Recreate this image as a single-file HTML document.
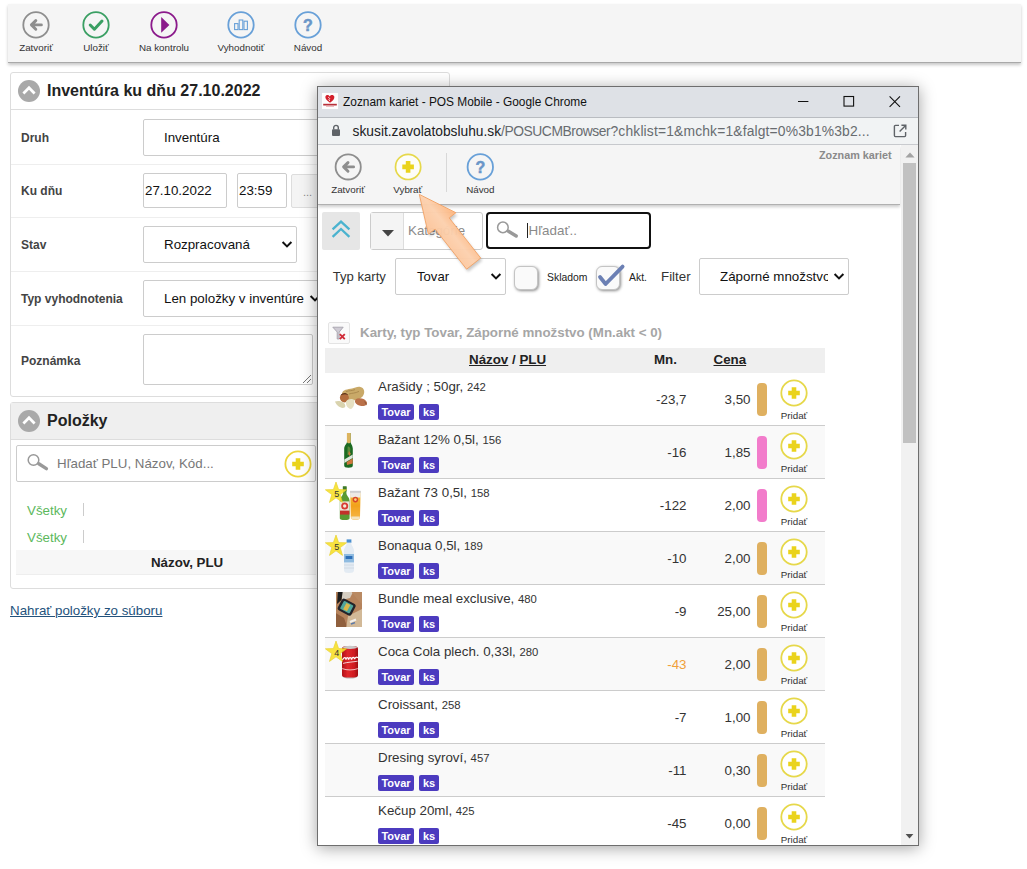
<!DOCTYPE html>
<html lang="sk">
<head>
<meta charset="utf-8">
<title>Inventúra</title>
<style>
*{box-sizing:border-box;}
html,body{margin:0;padding:0;}
body{width:1027px;height:869px;overflow:hidden;background:#fff;font-family:"Liberation Sans",sans-serif;color:#333;position:relative;}
.abs{position:absolute;}
.t{position:absolute;white-space:nowrap;line-height:1;}
/* main toolbar */
#tb{left:8px;top:4px;width:1013px;height:59px;background:#f5f5f5;border-bottom:1px solid #a9a9a9;box-shadow:0 2px 3px rgba(0,0,0,.22);}
.tbl{position:absolute;font-size:9.8px;color:#333;white-space:nowrap;line-height:1;transform:translateX(-50%);}
/* panels */
.panel{position:absolute;border:1px solid #ddd;border-radius:3px;background:#fff;}
.ptitle{position:absolute;font-weight:bold;font-size:16px;color:#222;white-space:nowrap;line-height:1;}
.lbl{position:absolute;font-weight:bold;font-size:12px;color:#444;white-space:nowrap;line-height:1;}
.fld{position:absolute;border:1px solid #ccc;border-radius:2px;background:#fff;}
.ftx{position:absolute;font-size:13.33px;color:#111;white-space:nowrap;line-height:1;}
.tag{position:absolute;height:16px;border-radius:2px;background:#4c3bbf;color:#fff;font-weight:bold;font-size:11px;line-height:16px;text-align:center;white-space:nowrap;}
.num{text-align:right;font-size:13.33px;color:#333;}
.sep{position:absolute;height:1px;background:#eee;}
</style>
</head>
<body>

<!-- ================= MAIN TOOLBAR ================= -->
<div id="tb" class="abs"></div>
<svg class="abs" style="left:0;top:0" width="340" height="62" viewBox="0 0 340 62">
  <!-- Zatvorit -->
  <circle cx="36" cy="24.9" r="12.7" fill="#f5f5f5" stroke="#8e8e8e" stroke-width="1.8"/>
  <path d="M41.4 24.9H32M35.8 20.6L31.4 24.9L35.8 29.2" fill="none" stroke="#8e8e8e" stroke-width="2.9" stroke-linecap="round" stroke-linejoin="round"/>
  <!-- Ulozit -->
  <circle cx="96" cy="24.9" r="12.7" fill="#f5f5f5" stroke="#3a9f63" stroke-width="1.8"/>
  <path d="M90.2 25L94.4 29.2L102 21" fill="none" stroke="#3a9f63" stroke-width="3" stroke-linecap="round" stroke-linejoin="round"/>
  <!-- Na kontrolu -->
  <circle cx="164" cy="24.9" r="12.7" fill="#f5f5f5" stroke="#8b1a8b" stroke-width="1.8"/>
  <path d="M161.2 17L169.4 24.9L161.2 32.8Z" fill="#8b1a8b"/>
  <!-- Vyhodnotit -->
  <circle cx="241" cy="24.9" r="12.7" fill="#f5f5f5" stroke="#68a0d8" stroke-width="1.8"/>
  <rect x="234.6" y="23.6" width="3.4" height="6" fill="none" stroke="#68a0d8" stroke-width="1.1"/>
  <rect x="239.2" y="20" width="3.6" height="9.6" fill="none" stroke="#68a0d8" stroke-width="1.1"/>
  <rect x="244" y="21.2" width="3.4" height="8.4" fill="none" stroke="#68a0d8" stroke-width="1.1"/>
  <!-- Navod -->
  <circle cx="308" cy="24.9" r="12.7" fill="#f5f5f5" stroke="#68a0d8" stroke-width="1.8"/>
  <text x="308" y="30.8" text-anchor="middle" font-family="Liberation Sans" font-weight="bold" font-size="16" fill="#6a96c8" stroke="#6a96c8" stroke-width=".5">?</text>
</svg>
<div class="tbl" style="left:36px;top:43px">Zatvoriť</div>
<div class="tbl" style="left:96px;top:43px">Uložiť</div>
<div class="tbl" style="left:164px;top:43px">Na kontrolu</div>
<div class="tbl" style="left:241px;top:43px">Vyhodnotiť</div>
<div class="tbl" style="left:308px;top:43px">Návod</div>

<!-- ================= PANEL 1 ================= -->
<div class="panel" style="left:10px;top:72px;width:440px;height:325px;"></div>
<div class="sep" style="left:11px;top:109px;width:438px;background:#ddd"></div>
<svg class="abs" style="left:18px;top:80px" width="22" height="22" viewBox="0 0 22 22"><circle cx="11" cy="11" r="11" fill="#a9a9a9"/><path d="M5.4 13.4L11 7.8L16.6 13.4" fill="none" stroke="#fff" stroke-width="2.8" stroke-linejoin="miter"/></svg>
<div class="ptitle" style="left:47px;top:83px">Inventúra ku dňu 27.10.2022</div>

<div class="lbl" style="left:21px;top:132px">Druh</div>
<div class="fld" style="left:143px;top:119px;width:300px;height:37px"></div>
<div class="ftx" style="left:164px;top:131px">Inventúra</div>
<div class="sep" style="left:11px;top:164px;width:438px"></div>

<div class="lbl" style="left:21px;top:185px">Ku dňu</div>
<div class="fld" style="left:143px;top:173px;width:84px;height:35px"></div>
<div class="ftx" style="left:145px;top:184px">27.10.2022</div>
<div class="fld" style="left:237px;top:173px;width:50px;height:35px"></div>
<div class="ftx" style="left:239px;top:184px">23:59</div>
<div class="fld" style="left:291px;top:174px;width:40px;height:34px;background:#f4f4f4;border-color:#ddd"></div>
<div class="ftx" style="left:303px;top:187px;color:#888;font-size:11px">...</div>
<div class="sep" style="left:11px;top:217px;width:438px"></div>

<div class="lbl" style="left:21px;top:239px">Stav</div>
<div class="fld" style="left:143px;top:226px;width:154px;height:37px"></div>
<div class="ftx" style="left:164px;top:238px">Rozpracovaná</div>
<svg class="abs" style="left:281px;top:240px" width="12" height="9" viewBox="0 0 12 9"><path d="M1.6 2L6 6.4L10.4 2" fill="none" stroke="#111" stroke-width="2"/></svg>
<div class="sep" style="left:11px;top:271px;width:438px"></div>

<div class="lbl" style="left:21px;top:293px">Typ vyhodnotenia</div>
<div class="fld" style="left:143px;top:280px;width:190px;height:37px"></div>
<div class="ftx" style="left:164px;top:292px">Len položky v inventúre</div>
<svg class="abs" style="left:309px;top:294px" width="12" height="9" viewBox="0 0 12 9"><path d="M1.6 2L6 6.4L10.4 2" fill="none" stroke="#111" stroke-width="2"/></svg>
<div class="sep" style="left:11px;top:325px;width:438px"></div>

<div class="lbl" style="left:21px;top:355px">Poznámka</div>
<div class="fld" style="left:143px;top:334px;width:170px;height:51px"></div>
<svg class="abs" style="left:302px;top:374px" width="10" height="10" viewBox="0 0 10 10"><path d="M1 9L9 1M5 9L9 5" stroke="#777" stroke-width="1"/></svg>

<!-- ================= PANEL 2 ================= -->
<div class="panel" style="left:10px;top:402px;width:440px;height:187px;"></div>
<div class="abs" style="left:11px;top:403px;width:438px;height:37px;background:#efefef;border-bottom:1px solid #ddd"></div>
<svg class="abs" style="left:18px;top:410px" width="22" height="22" viewBox="0 0 22 22"><circle cx="11" cy="11" r="11" fill="#a9a9a9"/><path d="M5.4 13.4L11 7.8L16.6 13.4" fill="none" stroke="#fff" stroke-width="2.8"/></svg>
<div class="ptitle" style="left:47px;top:413px">Položky</div>
<div class="fld" style="left:16px;top:445px;width:300px;height:37px;border-color:#ccc"></div>
<svg class="abs" style="left:25px;top:452px" width="26" height="20" viewBox="0 0 26 20"><circle cx="8.5" cy="8" r="5.3" fill="none" stroke="#999" stroke-width="1.5"/><path d="M13.8 11.8L21.4 16.6" stroke="#999" stroke-width="3.4" stroke-linecap="round"/></svg>
<div class="ftx" style="left:57px;top:457px;color:#777">Hľadať PLU, Názov, Kód...</div>
<svg class="abs" style="left:283px;top:449px" width="30" height="30" viewBox="0 0 30 30"><circle cx="15" cy="15" r="12.6" fill="#fff" stroke="#ecd53a" stroke-width="1.8"/><path d="M15 9.2V20.8M9.2 15H20.8" stroke="#ead31c" stroke-width="4.6"/></svg>
<div class="ftx" style="left:27px;top:504px;color:#5cb85c">Všetky</div>
<div class="abs" style="left:83px;top:503px;width:1px;height:13px;background:#ccc"></div>
<div class="ftx" style="left:27px;top:531px;color:#5cb85c">Všetky</div>
<div class="abs" style="left:83px;top:530px;width:1px;height:13px;background:#ccc"></div>
<div class="abs" style="left:16px;top:550px;width:300px;height:25px;background:#f7f7f7;border-bottom:1px solid #eee"></div>
<div class="lbl" style="left:151px;top:556px;font-size:13.3px;color:#222">Názov, PLU</div>
<div class="ftx" style="left:10px;top:604px;color:#23527c;text-decoration:underline">Nahrať položky zo súboru</div>

<!-- POPUP -->
<div id="pop" class="abs" style="left:317px;top:86px;width:602px;height:760px;background:#fff;border:1px solid #6e6e6e;box-shadow:0 2px 15px rgba(0,0,0,.36);overflow:hidden">
<div id="pin" class="abs" style="left:-318px;top:-87px;width:1027px;height:869px;">
<!-- window chrome -->
<div class="abs" style="left:318px;top:87px;width:600px;height:30px;background:#dee1e6"></div>
<div class="abs" style="left:318px;top:117px;width:600px;height:1px;background:#b9bcc1"></div>
<div class="abs" style="left:318px;top:118px;width:600px;height:26px;background:#f1f3f4"></div>
<div class="abs" style="left:318px;top:144px;width:600px;height:1px;background:#c9cbcf"></div>
<svg class="abs" style="left:322px;top:93px" width="16" height="16" viewBox="0 0 16 16"><rect width="16" height="16" fill="#fdfdfd"/><path d="M8 9.8C4.6 7.6 3 5.6 3.4 3.6C3.8 1.8 6.4 1.4 7.7 3.4C8.9 1.3 11.8 1.6 12.3 3.6C12.8 5.8 11 7.8 8 9.8Z" fill="#d4202c"/><path d="M6.2 4.2L7.8 5.6L6.8 6.8L8 8" stroke="#fff" stroke-width=".8" fill="none"/><rect x="1.2" y="10.8" width="13.6" height="1.7" fill="#b8303a"/><rect x="4" y="13.3" width="8" height=".7" fill="#e7a0a5"/></svg>
<div id="wtitle" class="t" style="left:343px;top:96.6px;font-size:11.9px;color:#111;">Zoznam kariet - POS Mobile - Google Chrome</div>
<svg class="abs" style="left:790px;top:87px" width="128" height="30" viewBox="0 0 128 30">
  <path d="M8 14.5H18.4" stroke="#111" stroke-width="1"/>
  <rect x="54" y="9.5" width="9.6" height="9.6" fill="none" stroke="#111" stroke-width="1.1"/>
  <path d="M99.6 9.4L110 19.8M110 9.4L99.6 19.8" stroke="#111" stroke-width="1.1"/>
</svg>
<svg class="abs" style="left:331px;top:124px" width="10" height="13" viewBox="0 0 10 13"><path d="M2.7 5.4V3.6C2.7 0.6 7.3 0.6 7.3 3.6V5.4" fill="none" stroke="#5f6368" stroke-width="1.4"/><rect x="1" y="5.2" width="8" height="6.8" rx="1" fill="#5f6368"/></svg>
<div id="url1" class="t" style="left:352.6px;top:125.4px;font-size:13.77px;color:#202124;">skusit.zavolatobsluhu.sk</div>
<div id="url2" class="t" style="left:501px;top:125.4px;font-size:13.85px;letter-spacing:-0.45px;color:#686c70;">/POSUCMBrowser</div>
<div id="url3" class="t" style="left:610.5px;top:125.4px;font-size:13.85px;letter-spacing:0.16px;color:#686c70;">?chklist=1&amp;mchk=1&amp;falgt=0%3b1%3b2...</div>
<svg class="abs" style="left:893px;top:124px" width="14" height="14" viewBox="0 0 14 14"><path d="M6 1.4H2.4C1.8 1.4 1.4 1.8 1.4 2.4V11.6C1.4 12.2 1.8 12.6 2.4 12.6H11.6C12.2 12.6 12.6 12.2 12.6 11.6V8" fill="none" stroke="#5f6368" stroke-width="1.4"/><path d="M8.4 1.2H12.8V5.6M12.6 1.4L6.6 7.4" fill="none" stroke="#5f6368" stroke-width="1.4"/></svg>

<!-- popup toolbar -->
<div class="abs" style="left:318px;top:145px;width:582px;height:60px;background:#f5f5f5;border-bottom:1px solid #b0b0b0;box-shadow:0 2px 3px rgba(0,0,0,.2)"></div>
<div class="t" style="left:819px;top:149.6px;font-size:10.8px;font-weight:bold;color:#8a8a8a">Zoznam kariet</div>
<svg class="abs" style="left:318px;top:145px" width="200" height="58" viewBox="0 0 200 58">
  <circle cx="30.2" cy="21.9" r="12.6" fill="#f5f5f5" stroke="#8e8e8e" stroke-width="1.8"/>
  <path d="M35.6 21.9H26.2M30 17.6L25.6 21.9L30 26.2" fill="none" stroke="#8e8e8e" stroke-width="2.9" stroke-linecap="round" stroke-linejoin="round"/>
  <circle cx="90.1" cy="21.9" r="12.6" fill="#fdfdf8" stroke="#e6d84a" stroke-width="1.7"/>
  <path d="M90.1 16.1V27.7M84.3 21.9H95.9" stroke="#ead31c" stroke-width="4.6"/>
  <path d="M128.5 8V47" stroke="#d8d8d8" stroke-width="1"/>
  <circle cx="162.3" cy="21.9" r="12.7" fill="#f5f5f5" stroke="#68a0d8" stroke-width="1.8"/>
  <text x="162.3" y="27.8" text-anchor="middle" font-family="Liberation Sans" font-weight="bold" font-size="16" fill="#6a96c8" stroke="#6a96c8" stroke-width=".5">?</text>
</svg>
<div class="tbl" style="left:348px;top:185px">Zatvoriť</div>
<div class="tbl" style="left:407.8px;top:185px">Vybrať</div>
<div class="tbl" style="left:480.3px;top:185px">Návod</div>

<!-- search row -->
<div class="abs" style="left:322px;top:212px;width:38px;height:38px;background:#e6e6e6;border-radius:2px"></div>
<svg class="abs" style="left:322px;top:212px" width="38" height="38" viewBox="0 0 38 38"><path d="M10.6 17.4L19 9.6L27.4 17.4M10.6 24.8L19 17L27.4 24.8" fill="none" stroke="#4bb3cf" stroke-width="2.3"/></svg>
<div class="abs" style="left:370px;top:212px;width:113px;height:38px;border:1px solid #ccc;border-radius:3px;background:#fff"></div>
<div class="abs" style="left:371px;top:213px;width:33px;height:36px;background:#f4f4f4;border-right:1px solid #ddd"></div>
<svg class="abs" style="left:381px;top:229px" width="14" height="8" viewBox="0 0 14 8"><path d="M1 1H13L7 7.4Z" fill="#444"/></svg>
<div class="ftx" style="left:408px;top:224px;color:#8a8a8a">Kategórie</div>
<div class="abs" style="left:486px;top:212px;width:165px;height:37px;border:2px solid #111;border-radius:4px;background:#fff"></div>
<svg class="abs" style="left:494px;top:218px" width="28" height="22" viewBox="0 0 28 22"><circle cx="8.9" cy="9.4" r="5.3" fill="none" stroke="#999" stroke-width="1.5"/><path d="M14.4 13.2L22.2 18" stroke="#999" stroke-width="3.4" stroke-linecap="round"/></svg>
<div class="abs" style="left:527px;top:223px;width:1px;height:15px;background:#222"></div>
<div class="ftx" style="left:528.5px;top:224px;color:#8a8a8a;font-size:13.4px">Hľadať..</div>
<!-- filter row -->
<div class="ftx" style="left:332.8px;top:270px;color:#333;font-size:13.1px">Typ karty</div>
<div class="fld" style="left:395px;top:258px;width:111px;height:37px"></div>
<div class="ftx" style="left:417px;top:270px;font-size:13.1px">Tovar</div>
<svg class="abs" style="left:490px;top:272px" width="12" height="9" viewBox="0 0 12 9"><path d="M1.6 2L6 6.4L10.4 2" fill="none" stroke="#111" stroke-width="2"/></svg>
<div class="abs" style="left:514px;top:266px;width:24px;height:24px;border-radius:6px;background:#fafafa;border:1px solid #c4c4c4;box-shadow:1px 1px 3px rgba(0,0,0,.45)"></div>
<div class="t" style="left:547px;top:273px;font-size:10.4px;color:#222">Skladom</div>
<div class="abs" style="left:596px;top:266px;width:24px;height:24px;border-radius:6px;background:#fafafa;border:1px solid #c4c4c4;box-shadow:1px 1px 3px rgba(0,0,0,.45)"></div>
<svg class="abs" style="left:594px;top:260px" width="34" height="34" viewBox="0 0 34 34"><path d="M6 17L11.6 24L28.6 6.6" fill="none" stroke="#6c80b4" stroke-width="3.8" stroke-linecap="round" stroke-linejoin="round"/></svg>
<div class="t" style="left:629px;top:273px;font-size:10.4px;color:#222">Akt.</div>
<div class="ftx" style="left:661px;top:270px;color:#333">Filter</div>
<div class="fld" style="left:699px;top:258px;width:150px;height:37px"></div>
<div class="abs" style="left:720px;top:262px;width:108px;height:28px;overflow:hidden"><div class="ftx" style="left:0;top:8px">Záporné množstvo</div></div>
<svg class="abs" style="left:833px;top:272px" width="12" height="9" viewBox="0 0 12 9"><path d="M1.6 2L6 6.4L10.4 2" fill="none" stroke="#111" stroke-width="2"/></svg>

<!-- table -->
<svg class="abs" style="left:328px;top:322px" width="22" height="22" viewBox="0 0 22 22"><rect x=".5" y=".5" width="21" height="21" rx="1.5" fill="#fafafa" stroke="#e4e4e4"/><path d="M4.8 5.2H15.2L11.2 10V17H9.2V10Z" fill="#cfcbd4" stroke="#a09ca6" stroke-width=".8"/><path d="M11.8 12.2L16.8 17.2M16.8 12.2L11.8 17.2" stroke="#d02c38" stroke-width="1.9"/></svg>
<div class="t" style="left:360px;top:326px;font-size:13.33px;font-weight:bold;color:#a6a6a6">Karty, typ Tovar, Záporné množstvo (Mn.akt &lt; 0)</div>
<div class="abs" style="left:325px;top:348px;width:500px;height:25px;background:#efefef"></div>
<div class="t" style="left:469px;top:353px;font-size:13.33px;font-weight:bold;color:#222"><u>Názov</u> / <u>PLU</u></div>
<div class="t" style="left:654px;top:353px;font-size:13.33px;font-weight:bold;color:#222">Mn.</div>
<div class="t" style="left:713.5px;top:353px;font-size:13.33px;font-weight:bold;color:#222"><u>Cena</u></div>

<div class="abs" style="left:325px;top:373px;width:500px;height:53px;background:#fff;border-bottom:1px solid #ccc"></div>
<svg class="abs" style="left:333px;top:384px" width="37" height="27" viewBox="0 0 37 27"><defs><filter id="b1"><feGaussianBlur stdDeviation=".55"/></filter></defs><g filter="url(#b1)">
<path d="M9 10C9 5.6 15 5.4 19 4.6C22 4 24 2.4 27.4 3C31.6 3.8 32.4 9 29.6 12.4C27.6 14.8 22 16.6 17 16.6C12 16.6 9 14 9 10Z" fill="#c9a968"/>
<path d="M13 7.6C16 6.4 19 7 22 5.6M16 10C19 9 22 9.4 26 7.4" stroke="#a8874c" stroke-width=".9" fill="none"/>
<ellipse cx="11.4" cy="13.8" rx="4.5" ry="4.7" fill="#b36d3c"/>
<path d="M7.6 11.4C9 8.4 13.6 8.6 15.4 11C13 10 10 10.2 7.6 11.4Z" fill="#4a2a16"/>
<ellipse cx="28" cy="18.2" rx="6.2" ry="3.7" fill="#ba7149" transform="rotate(14 28 18.2)"/>
<path d="M31 17C33 18 34 20 33.4 21.4C32.6 20 31.8 18.6 31 17Z" fill="#8a5638"/>
<path d="M2 17.6C4.6 16.6 8 17 10.4 18.6C12.4 20 13 22.6 11.6 23.6C8 25 3.4 22 2 17.6Z" fill="#d9d3ae"/>
<path d="M13 17.6C15 14.6 19.6 14.6 21 16C22 19 21 23.4 18 25C15 25 12.4 21.6 13 17.6Z" fill="#e6e0c2"/>
</g></svg>
<div class="t" style="left:378px;top:380px;font-size:13.33px;color:#333">Arašidy ; 50gr, <span style="font-size:11.3px">242</span></div>
<div class="tag" style="left:378px;top:404px;width:36px">Tovar</div><div class="tag" style="left:419px;top:404px;width:20px">ks</div>
<div class="t num" style="left:600px;width:86.5px;top:393px;color:#333">-23,7</div>
<div class="t num" style="left:690px;width:60.5px;top:393px">3,50</div>
<div class="abs" style="left:757px;top:383px;width:10px;height:33px;border-radius:4px;background:#dfb060"></div>
<svg class="abs" style="left:779px;top:378px" width="30" height="30" viewBox="0 0 30 30"><circle cx="15" cy="15" r="12.7" fill="#fff" stroke="#e6d84a" stroke-width="1.8"/><path d="M15 9.2V20.8M9.2 15H20.8" stroke="#ead31c" stroke-width="4.6" stroke-linejoin="round"/></svg>
<div class="tbl" style="left:794px;top:411px">Pridať</div>
<div class="abs" style="left:325px;top:426px;width:500px;height:53px;background:#f9f9f9;border-bottom:1px solid #ccc"></div>
<svg class="abs" style="left:342px;top:432px" width="14" height="38" viewBox="0 0 14 38"><defs><filter id="b2"><feGaussianBlur stdDeviation=".5"/></filter></defs><g filter="url(#b2)">
<path d="M5 1H8.6V9.4C8.6 12 10.8 13 10.8 16.6V33.6C10.8 35.4 9.6 35.8 6.5 35.8C3.4 35.8 2.2 35.4 2.2 33.6V16.6C2.2 13 5 12 5 9.4Z" fill="#1c6b24"/>
<path d="M4.9 1H8.7V9.4C8.7 10.6 8 11.2 6.8 11.2C5.6 11.2 4.9 10.6 4.9 9.4Z" fill="#dcb45e"/>
<path d="M5.6 15C6.6 14 8 15 8.4 17L8 22L5.4 23Z" fill="#5a8a3a"/>
<path d="M2.3 27.4L10.7 22.4V26L2.3 31Z" fill="#dfe6dc"/>
<path d="M4.6 30L10.7 26.4V31.4L5 33Z" fill="#d0763c"/>
<path d="M7 19L8.8 21.6L7.6 24L6.2 22Z" fill="#c8783a"/>
</g></svg>
<div class="t" style="left:378px;top:433px;font-size:13.33px;color:#333">Bažant 12% 0,5l, <span style="font-size:11.3px">156</span></div>
<div class="tag" style="left:378px;top:457px;width:36px">Tovar</div><div class="tag" style="left:419px;top:457px;width:20px">ks</div>
<div class="t num" style="left:600px;width:86.5px;top:446px;color:#333">-16</div>
<div class="t num" style="left:690px;width:60.5px;top:446px">1,85</div>
<div class="abs" style="left:757px;top:436px;width:10px;height:33px;border-radius:4px;background:#f27ccb"></div>
<svg class="abs" style="left:779px;top:431px" width="30" height="30" viewBox="0 0 30 30"><circle cx="15" cy="15" r="12.7" fill="#fff" stroke="#e6d84a" stroke-width="1.8"/><path d="M15 9.2V20.8M9.2 15H20.8" stroke="#ead31c" stroke-width="4.6" stroke-linejoin="round"/></svg>
<div class="tbl" style="left:794px;top:464px">Pridať</div>
<div class="abs" style="left:325px;top:479px;width:500px;height:53px;background:#fff;border-bottom:1px solid #ccc"></div>
<svg class="abs" style="left:337px;top:485px" width="26" height="37" viewBox="0 0 26 37"><defs><filter id="b3"><feGaussianBlur stdDeviation=".5"/></filter><linearGradient id="beer" x1="0" x2="0" y1="0" y2="1"><stop offset="0" stop-color="#f4c23c"/><stop offset=".5" stop-color="#f2a11c"/><stop offset="1" stop-color="#f6b848"/></linearGradient></defs><g filter="url(#b3)">
<path d="M6 1.4H9.4V8C9.4 11 12.6 12 12.6 16V33C12.6 34.6 11.4 35 7.7 35C4 35 2.8 34.6 2.8 33V16C2.8 12 6 11 6 8Z" fill="#5a9a32"/>
<rect x="5.8" y="1.4" width="3.8" height="5" fill="#3f7a2a"/>
<rect x="3" y="16.4" width="9.4" height="10" fill="#ebe6da"/>
<circle cx="7.7" cy="21" r="3.5" fill="#d83a30"/><circle cx="7.7" cy="21" r="1.7" fill="#f4ead8"/>
<rect x="3" y="25.6" width="9.4" height="4" fill="#c2332c"/>
<path d="M13.2 6.6H23.6L23 32C23 34 21.6 34.8 18.4 34.8C15.2 34.8 13.8 34 13.8 32Z" fill="url(#beer)"/>
<path d="M13 6H23.8L23.6 12.6H13.2Z" fill="#eeeae4"/>
<rect x="13" y="5.8" width="10.8" height="2" fill="#cfcfcf"/>
<circle cx="18.4" cy="14.6" r="2.8" fill="#d8442c"/><circle cx="18.4" cy="14.6" r="1.3" fill="#f6d878"/>
<path d="M14.2 31.4H22.8L22.6 34C21.6 34.8 15.2 34.8 14.4 34Z" fill="#f4e4c0"/>
</g></svg>
<div class="t" style="left:378px;top:486px;font-size:13.33px;color:#333">Bažant 73 0,5l, <span style="font-size:11.3px">158</span></div>
<div class="tag" style="left:378px;top:510px;width:36px">Tovar</div><div class="tag" style="left:419px;top:510px;width:20px">ks</div>
<div class="t num" style="left:600px;width:86.5px;top:499px;color:#333">-122</div>
<div class="t num" style="left:690px;width:60.5px;top:499px">2,00</div>
<div class="abs" style="left:757px;top:489px;width:10px;height:33px;border-radius:4px;background:#f27ccb"></div>
<svg class="abs" style="left:779px;top:484px" width="30" height="30" viewBox="0 0 30 30"><circle cx="15" cy="15" r="12.7" fill="#fff" stroke="#e6d84a" stroke-width="1.8"/><path d="M15 9.2V20.8M9.2 15H20.8" stroke="#ead31c" stroke-width="4.6" stroke-linejoin="round"/></svg>
<div class="tbl" style="left:794px;top:517px">Pridať</div>
<svg class="abs" style="left:324.4px;top:480.7px" width="24" height="24" viewBox="0 0 24 24"><path d="M12 1L14.6 8.6L22.6 8.8L16.2 13.6L18.5 21.4L12 16.8L5.5 21.4L7.8 13.6L1.4 8.8L9.4 8.6Z" fill="#f8e232" stroke="#e6cf24" stroke-width=".7" opacity=".93"/><text x="12.7" y="15.8" text-anchor="middle" font-family="Liberation Sans" font-size="9" fill="#333">5</text></svg>
<div class="abs" style="left:325px;top:532px;width:500px;height:53px;background:#f9f9f9;border-bottom:1px solid #ccc"></div>
<svg class="abs" style="left:341px;top:538px" width="16" height="37" viewBox="0 0 16 37"><defs><filter id="b4"><feGaussianBlur stdDeviation=".45"/></filter></defs><g filter="url(#b4)">
<rect x="5.6" y="1.4" width="4.8" height="3.4" fill="#4a8fd0"/>
<path d="M5.8 4.8H10.2C10.2 8 13 9 13 13V32C13 34.4 11.4 35 8 35C4.6 35 3 34.4 3 32V13C3 9 5.8 8 5.8 4.8Z" fill="#e3ebf3"/>
<rect x="3" y="16" width="10" height="8.4" fill="#8fbbe0"/>
<rect x="4.6" y="18" width="6.8" height="3" fill="#2f6fb8"/>
<path d="M3 27H13M3 30H13" stroke="#cdd6e0" stroke-width=".8"/>
</g></svg>
<div class="t" style="left:378px;top:539px;font-size:13.33px;color:#333">Bonaqua 0,5l, <span style="font-size:11.3px">189</span></div>
<div class="tag" style="left:378px;top:563px;width:36px">Tovar</div><div class="tag" style="left:419px;top:563px;width:20px">ks</div>
<div class="t num" style="left:600px;width:86.5px;top:552px;color:#333">-10</div>
<div class="t num" style="left:690px;width:60.5px;top:552px">2,00</div>
<div class="abs" style="left:757px;top:542px;width:10px;height:33px;border-radius:4px;background:#dfb060"></div>
<svg class="abs" style="left:779px;top:537px" width="30" height="30" viewBox="0 0 30 30"><circle cx="15" cy="15" r="12.7" fill="#fff" stroke="#e6d84a" stroke-width="1.8"/><path d="M15 9.2V20.8M9.2 15H20.8" stroke="#ead31c" stroke-width="4.6" stroke-linejoin="round"/></svg>
<div class="tbl" style="left:794px;top:570px">Pridať</div>
<svg class="abs" style="left:324.4px;top:533.7px" width="24" height="24" viewBox="0 0 24 24"><path d="M12 1L14.6 8.6L22.6 8.8L16.2 13.6L18.5 21.4L12 16.8L5.5 21.4L7.8 13.6L1.4 8.8L9.4 8.6Z" fill="#f8e232" stroke="#e6cf24" stroke-width=".7" opacity=".93"/><text x="12.7" y="15.8" text-anchor="middle" font-family="Liberation Sans" font-size="9" fill="#333">5</text></svg>
<div class="abs" style="left:325px;top:585px;width:500px;height:53px;background:#fff;border-bottom:1px solid #ccc"></div>
<svg class="abs" style="left:336px;top:592px" width="26" height="35" viewBox="0 0 26 35"><defs><filter id="b5"><feGaussianBlur stdDeviation=".7"/></filter><clipPath id="c5"><rect width="26" height="35"/></clipPath></defs><g clip-path="url(#c5)"><g filter="url(#b5)">
<rect x="-2" y="-2" width="30" height="39" fill="#b5835c"/>
<path d="M6 -2H18L14 6L6 8Z" fill="#d6cec2"/>
<path d="M2 -2H7L5.4 8L1 12Z" fill="#1e1c1c"/>
<path d="M14 -2H28V14L22 8Z" fill="#b98a64"/>
<path d="M-2 20L8 26L12 37H-2Z" fill="#8f5e3e"/>
<path d="M12 24L28 16V37H10Z" fill="#d2b998"/>
<rect x="3" y="8.6" width="15.4" height="13" rx="2.6" fill="#202329" transform="rotate(28 10.7 15)"/>
<rect x="5.4" y="10.6" width="10.8" height="9" rx="1" fill="#4fa59c" transform="rotate(28 10.7 15)"/>
<rect x="8.6" y="11.6" width="4.4" height="7" fill="#d9b84c" transform="rotate(28 10.7 15)"/>
<path d="M14 30L20 27.4" stroke="#f4f0ea" stroke-width="2.2"/>
<path d="M15 32L19 30.6" stroke="#5a78a8" stroke-width="1.4"/>
</g></g></svg>
<div class="t" style="left:378px;top:592px;font-size:13.33px;color:#333">Bundle meal exclusive, <span style="font-size:11.3px">480</span></div>
<div class="tag" style="left:378px;top:616px;width:36px">Tovar</div><div class="tag" style="left:419px;top:616px;width:20px">ks</div>
<div class="t num" style="left:600px;width:86.5px;top:605px;color:#333">-9</div>
<div class="t num" style="left:690px;width:60.5px;top:605px">25,00</div>
<div class="abs" style="left:757px;top:595px;width:10px;height:33px;border-radius:4px;background:#dfb060"></div>
<svg class="abs" style="left:779px;top:590px" width="30" height="30" viewBox="0 0 30 30"><circle cx="15" cy="15" r="12.7" fill="#fff" stroke="#e6d84a" stroke-width="1.8"/><path d="M15 9.2V20.8M9.2 15H20.8" stroke="#ead31c" stroke-width="4.6" stroke-linejoin="round"/></svg>
<div class="tbl" style="left:794px;top:623px">Pridať</div>
<div class="abs" style="left:325px;top:638px;width:500px;height:53px;background:#f9f9f9;border-bottom:1px solid #ccc"></div>
<svg class="abs" style="left:339px;top:644px" width="22" height="37" viewBox="0 0 22 37"><defs><filter id="b6"><feGaussianBlur stdDeviation=".45"/></filter><linearGradient id="cg" x1="0" x2="1" y1="0" y2="0"><stop offset="0" stop-color="#b01018"/><stop offset=".35" stop-color="#e0282c"/><stop offset=".75" stop-color="#d01c22"/><stop offset="1" stop-color="#9c0c14"/></linearGradient></defs><g filter="url(#b6)">
<ellipse cx="11" cy="32.6" rx="7.4" ry="2" fill="#b8b8b8"/>
<path d="M3 5C3 2.6 5 2 11 2C17 2 19 2.6 19 5V31C19 33 17 33.6 11 33.6C5 33.6 3 33 3 31Z" fill="url(#cg)"/>
<ellipse cx="11" cy="3.4" rx="7" ry="1.6" fill="#c9c9c9"/>
<path d="M3.4 16C5 13 6.6 13 7 15.6C7.4 13 9 13 9.6 15.6C10.2 13 12 13 12.6 15.6C13.2 13 15 12.6 15.6 15.2C16.2 13 18 12.6 18.8 14" stroke="#fff" stroke-width="1.3" fill="none"/>
<path d="M4 19.4C8 18.2 14 18 18.6 17.2" stroke="#fff" stroke-width=".8" fill="none"/>
<path d="M3.2 24.6C8 26.4 14 26.4 18.8 24.6" stroke="#f5d0d0" stroke-width=".9" fill="none"/>
</g></svg>
<div class="t" style="left:378px;top:645px;font-size:13.33px;color:#333">Coca Cola plech. 0,33l, <span style="font-size:11.3px">280</span></div>
<div class="tag" style="left:378px;top:669px;width:36px">Tovar</div><div class="tag" style="left:419px;top:669px;width:20px">ks</div>
<div class="t num" style="left:600px;width:86.5px;top:658px;color:#f0a13a">-43</div>
<div class="t num" style="left:690px;width:60.5px;top:658px">2,00</div>
<div class="abs" style="left:757px;top:648px;width:10px;height:33px;border-radius:4px;background:#dfb060"></div>
<svg class="abs" style="left:779px;top:643px" width="30" height="30" viewBox="0 0 30 30"><circle cx="15" cy="15" r="12.7" fill="#fff" stroke="#e6d84a" stroke-width="1.8"/><path d="M15 9.2V20.8M9.2 15H20.8" stroke="#ead31c" stroke-width="4.6" stroke-linejoin="round"/></svg>
<div class="tbl" style="left:794px;top:676px">Pridať</div>
<svg class="abs" style="left:324.4px;top:639.7px" width="24" height="24" viewBox="0 0 24 24"><path d="M12 1L14.6 8.6L22.6 8.8L16.2 13.6L18.5 21.4L12 16.8L5.5 21.4L7.8 13.6L1.4 8.8L9.4 8.6Z" fill="#f8e232" stroke="#e6cf24" stroke-width=".7" opacity=".93"/><text x="12.7" y="15.8" text-anchor="middle" font-family="Liberation Sans" font-size="9" fill="#333">4</text></svg>
<div class="abs" style="left:325px;top:691px;width:500px;height:53px;background:#fff;border-bottom:1px solid #ccc"></div>
<!--IMG6-->
<div class="t" style="left:378px;top:698px;font-size:13.33px;color:#333">Croissant, <span style="font-size:11.3px">258</span></div>
<div class="tag" style="left:378px;top:722px;width:36px">Tovar</div><div class="tag" style="left:419px;top:722px;width:20px">ks</div>
<div class="t num" style="left:600px;width:86.5px;top:711px;color:#333">-7</div>
<div class="t num" style="left:690px;width:60.5px;top:711px">1,00</div>
<div class="abs" style="left:757px;top:701px;width:10px;height:33px;border-radius:4px;background:#dfb060"></div>
<svg class="abs" style="left:779px;top:696px" width="30" height="30" viewBox="0 0 30 30"><circle cx="15" cy="15" r="12.7" fill="#fff" stroke="#e6d84a" stroke-width="1.8"/><path d="M15 9.2V20.8M9.2 15H20.8" stroke="#ead31c" stroke-width="4.6" stroke-linejoin="round"/></svg>
<div class="tbl" style="left:794px;top:729px">Pridať</div>
<div class="abs" style="left:325px;top:744px;width:500px;height:53px;background:#f9f9f9;border-bottom:1px solid #ccc"></div>
<!--IMG7-->
<div class="t" style="left:378px;top:751px;font-size:13.33px;color:#333">Dresing syroví, <span style="font-size:11.3px">457</span></div>
<div class="tag" style="left:378px;top:775px;width:36px">Tovar</div><div class="tag" style="left:419px;top:775px;width:20px">ks</div>
<div class="t num" style="left:600px;width:86.5px;top:764px;color:#333">-11</div>
<div class="t num" style="left:690px;width:60.5px;top:764px">0,30</div>
<div class="abs" style="left:757px;top:754px;width:10px;height:33px;border-radius:4px;background:#dfb060"></div>
<svg class="abs" style="left:779px;top:749px" width="30" height="30" viewBox="0 0 30 30"><circle cx="15" cy="15" r="12.7" fill="#fff" stroke="#e6d84a" stroke-width="1.8"/><path d="M15 9.2V20.8M9.2 15H20.8" stroke="#ead31c" stroke-width="4.6" stroke-linejoin="round"/></svg>
<div class="tbl" style="left:794px;top:782px">Pridať</div>
<div class="abs" style="left:325px;top:797px;width:500px;height:53px;background:#fff;border-bottom:1px solid #ccc"></div>
<!--IMG8-->
<div class="t" style="left:378px;top:804px;font-size:13.33px;color:#333">Kečup 20ml, <span style="font-size:11.3px">425</span></div>
<div class="tag" style="left:378px;top:828px;width:36px">Tovar</div><div class="tag" style="left:419px;top:828px;width:20px">ks</div>
<div class="t num" style="left:600px;width:86.5px;top:817px;color:#333">-45</div>
<div class="t num" style="left:690px;width:60.5px;top:817px">0,00</div>
<div class="abs" style="left:757px;top:807px;width:10px;height:33px;border-radius:4px;background:#dfb060"></div>
<svg class="abs" style="left:779px;top:802px" width="30" height="30" viewBox="0 0 30 30"><circle cx="15" cy="15" r="12.7" fill="#fff" stroke="#e6d84a" stroke-width="1.8"/><path d="M15 9.2V20.8M9.2 15H20.8" stroke="#ead31c" stroke-width="4.6" stroke-linejoin="round"/></svg>
<div class="tbl" style="left:794px;top:835px">Pridať</div>
<!-- scrollbar -->
<div class="abs" style="left:901px;top:145px;width:17px;height:700px;background:#f1f1f1"></div>
<svg class="abs" style="left:901px;top:145px" width="17" height="17" viewBox="0 0 17 17"><path d="M4.4 12.4L9 7.6L13.6 12.4Z" fill="#a3a3a3"/></svg>
<div class="abs" style="left:903px;top:163px;width:13px;height:280px;background:#c1c1c1"></div>
<svg class="abs" style="left:901px;top:828px" width="17" height="17" viewBox="0 0 17 17"><path d="M4.6 6L8.5 10.4L12.4 6Z" fill="#505050"/></svg>

</div>
</div>
<svg class="abs" style="left:0;top:0;pointer-events:none" width="1027" height="869" viewBox="0 0 1027 869">
<defs><linearGradient id="ag" gradientUnits="userSpaceOnUse" x1="457.4" y1="215.4" x2="430.6" y2="236.4"><stop offset="0" stop-color="#ffb67e"/><stop offset=".45" stop-color="#ffd3b0"/><stop offset="1" stop-color="#ffc69a"/></linearGradient>
<filter id="ash" x="-20%" y="-20%" width="150%" height="150%"><feGaussianBlur stdDeviation="1.6"/></filter></defs>
<path d="M419.3 194.4 L455.9 212.7 L449.2 217.9 L480.7 258.1 L466.6 269.2 L435.1 229.1 L428.4 234.3Z" transform="translate(1.5 2.5)" fill="#000" opacity=".22" filter="url(#ash)"/>
<path d="M419.3 194.4 L455.9 212.7 L449.2 217.9 L480.7 258.1 L466.6 269.2 L435.1 229.1 L428.4 234.3Z" fill="url(#ag)" stroke="#f3a468" stroke-width="1" stroke-linejoin="round" opacity=".95"/>
</svg>

</body>
</html>
